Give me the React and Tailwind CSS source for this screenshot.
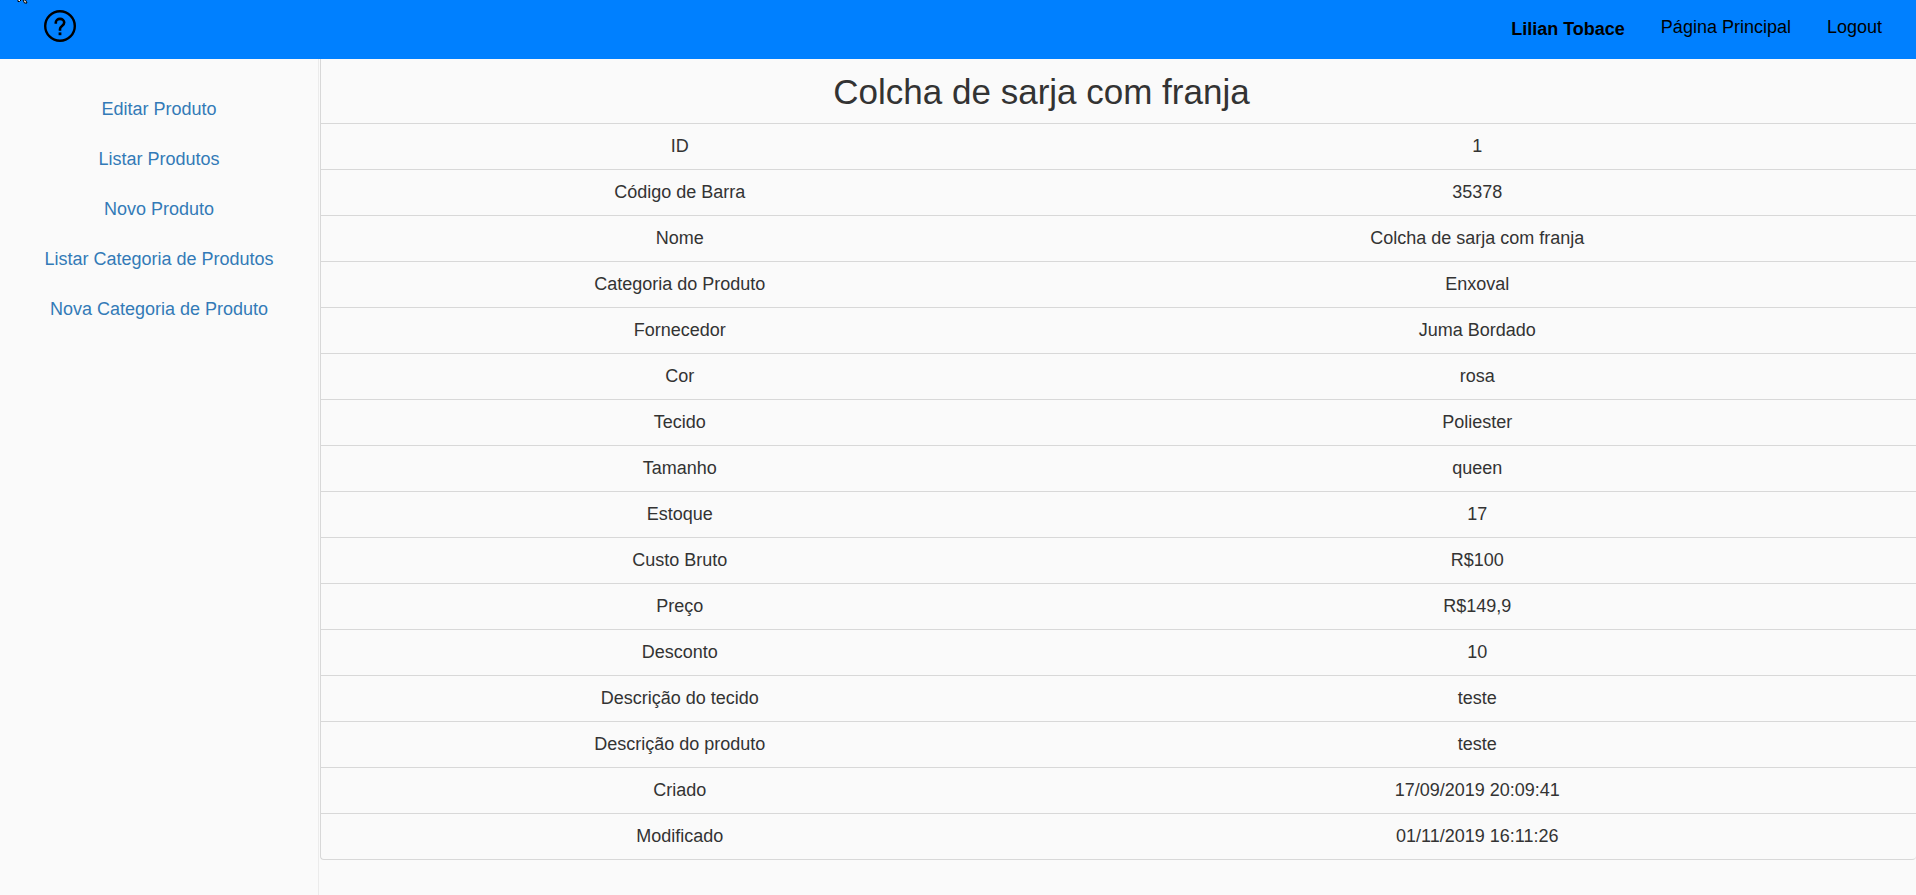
const menu = [
  'Editar Produto',
  'Listar Produtos',
  'Novo Produto',
  'Listar Categoria de Produtos',
  'Nova Categoria de Produto',
];

const rows = [
  ['ID', '1'],
  ['Código de Barra', '35378'],
  ['Nome', 'Colcha de sarja com franja'],
  ['Categoria do Produto', 'Enxoval'],
  ['Fornecedor', 'Juma Bordado'],
  ['Cor', 'rosa'],
  ['Tecido', 'Poliester'],
  ['Tamanho', 'queen'],
  ['Estoque', '17'],
  ['Custo Bruto', 'R$100'],
  ['Preço', 'R$149,9'],
  ['Desconto', '10'],
  ['Descrição do tecido', 'teste'],
  ['Descrição do produto', 'teste'],
  ['Criado', '17/09/2019 20:09:41'],
  ['Modificado', '01/11/2019 16:11:26'],
];

function HelpIcon() {
  return (
    <svg width="32" height="32" viewBox="0 0 32 32" fill="none" stroke="#000" aria-hidden="true">
      <circle cx="16" cy="16" r="14.8" strokeWidth="2.4" />
      <path d="M11.8 13.8V12.600a4.200 3.700 0 0 1 8.400 0c0 3.400-4.200 3.400-4.200 6.400v1.800" strokeWidth="2.6" />
      <path d="M16 22.400v2.800" strokeWidth="2.8" />
    </svg>
  );
}

function Pointer() {
  return (
    <svg className="absolute left-4 top-0" width="14" height="4" viewBox="0 0 14 4" aria-hidden="true">
      <path d="M2 0v1.5h1.5L5 0M7 0l1.500 3h2.500L9.500 0z" fill="#fff" stroke="#000" />
    </svg>
  );
}

export default function App() {
  return (
    <div className="flex min-h-screen flex-col bg-[#fafafa] font-['Liberation_Sans',Arial,sans-serif] text-lg leading-[25px] text-[#333]">
      <header className="relative flex h-[59px] items-start justify-between bg-[#0080ff] pl-11 pr-[34px] text-black">
        <a href="#ajuda" aria-label="Ajuda" className="mt-[10px]">
          <HelpIcon />
        </a>
        <nav className="flex items-start gap-9 pt-[15px]">
          <strong className="pt-[2px]">Lilian Tobace</strong>
          <a href="#principal">Página Principal</a>
          <a href="#logout">Logout</a>
        </nav>
        <Pointer />
      </header>
      <div className="flex flex-1">
        <nav className="w-[319px] shrink-0 border-r border-[#ebebeb] pt-[38px]">
          <ul className="flex flex-col gap-[25px] text-center">
            {menu.map((item) => (
              <li key={item}>
                <a href="#produtos" className="text-[#337ab7]">{item}</a>
              </li>
            ))}
          </ul>
        </nav>
        <main className="min-w-0 flex-1 pl-px">
          <div className="rounded-b border-b border-l border-[#d8d8d8]">
            <table className="w-full table-fixed border-collapse text-center">
              <thead>
                <tr>
                  <th colSpan={2} className="h-16 pr-[154px] pt-[2px] text-[35px] leading-10 font-normal">
                    <h1>Colcha de sarja com franja</h1>
                  </th>
                </tr>
              </thead>
              <tbody>
                {rows.map(([label, value]) => (
                  <tr key={label} className="h-[46px] border-t border-[#d8d8d8]">
                    <th scope="row" className="pr-20 font-normal">{label}</th>
                    <td className="pr-20">{value}</td>
                  </tr>
                ))}
              </tbody>
            </table>
          </div>
        </main>
      </div>
    </div>
  );
}
